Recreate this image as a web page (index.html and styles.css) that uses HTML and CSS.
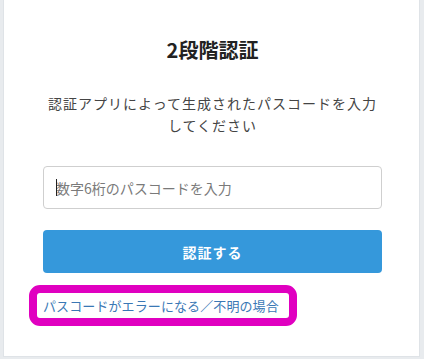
FILE: index.html
```html
<!DOCTYPE html>
<html lang="ja">
<head>
<meta charset="utf-8">
<title>2段階認証</title>
<link rel="stylesheet" href="styles.css">
</head>
<body>
<main class="card">
  <h1 class="title">2段階認証</h1>
  <p class="desc">認証アプリによって生成されたパスコードを入力<br>してください</p>
  <div class="field">
    <input class="code-input" type="text" placeholder="数字6桁のパスコードを入力">
    <span class="caret"></span>
  </div>
  <button class="submit" type="button">認証する</button>
  <div class="help-row">
    <a class="help-link" href="#">パスコードがエラーになる／不明の場合</a>
  </div>
</main>
</body>
</html>
```
FILE: styles.css
```css
html, body {
  margin: 0;
  padding: 0;
}
body {
  background: #e8ebee;
  width: 424px;
  height: 359px;
  padding: 0 4px 0 3px;
  box-sizing: border-box;
  font-family: "Noto Sans CJK JP", "Noto Sans", sans-serif;
}
.card {
  background: #fff;
  border: 1px solid #dfe3e7;
  border-top: none;
  height: 357px;
  box-sizing: border-box;
  padding: 36px 37px 0 39px;
  display: flex;
  flex-direction: column;
}
.title {
  margin: 0;
  font-size: 20px;
  line-height: 28px;
  font-weight: 700;
  color: #222;
  text-align: center;
}
.desc {
  margin: 28px 0 0;
  font-size: 14px;
  line-height: 22px;
  letter-spacing: 1px;
  color: #444;
  text-align: center;
}
.field {
  position: relative;
  margin-top: 30px;
}
.code-input {
  display: block;
  width: 100%;
  height: 43px;
  box-sizing: border-box;
  border: 1px solid #cfcfcf;
  border-radius: 4px;
  padding: 0 12px;
  font-family: "Noto Sans CJK JP", "Noto Sans", sans-serif;
  font-size: 14px;
  color: #333;
  outline: none;
}
.code-input::placeholder {
  color: #7a7a7a;
}
.caret {
  position: absolute;
  left: 13px;
  top: 13px;
  width: 1px;
  height: 17px;
  background: #222;
}
.submit {
  margin-top: 21px;
  height: 43px;
  width: 100%;
  border: none;
  border-radius: 4px;
  background: #3598db;
  color: #fff;
  font-family: "Noto Sans CJK JP", "Noto Sans", sans-serif;
  font-size: 14px;
  font-weight: 700;
  letter-spacing: 1px;
}
.help-row {
  margin-top: 20px;
  display: flex;
  margin-left: -6px;
}
.help-link {
  display: block;
  height: 25px;
  line-height: 25px;
  padding: 0 10px 0 6px;
  font-size: 13px;
  letter-spacing: 0.1px;
  color: #3a78b5;
  text-decoration: none;
  outline: 8px solid #e000c0;
  outline-offset: 0;
  border-radius: 3px;
}
```
